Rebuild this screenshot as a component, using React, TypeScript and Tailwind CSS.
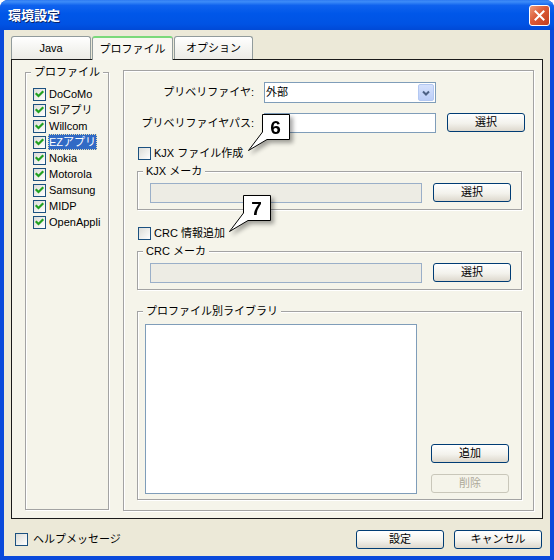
import React from "react";

const Check = ({ checked }: { checked?: boolean }) => (
  <span className="flex h-[13px] w-[13px] shrink-0 items-center justify-center border border-[#1C5180] bg-[linear-gradient(135deg,#DCDCD7,#FFFFFF)]">
    {checked && (
      <svg width="11" height="11" viewBox="0 0 11 11" className="block">
        <path d="M2.5 5 L4.5 7 L8.5 3" fill="none" stroke="#21A121" strokeWidth="2.2" strokeLinecap="square" />
      </svg>
    )}
  </span>
);

const Btn = ({ children, className = "", disabled }: { children: React.ReactNode; className?: string; disabled?: boolean }) => (
  <div
    className={`flex shrink-0 items-center justify-center rounded-[3px] border ${
      disabled
        ? "border-[#C9C7BA] bg-[#F5F4EA] text-[#ACA899]"
        : "border-[#003C74] bg-[linear-gradient(to_bottom,#FFFFFF,#F3F2EC_55%,#DDD8CD)] text-black"
    } ${className}`}
  >
    {children}
  </div>
);

const Group = ({ label, className = "", children }: { label: string; className?: string; children?: React.ReactNode }) => (
  <div className={`relative shrink-0 border border-[#A3A3A3] shadow-[1px_1px_0_#FFFFFF,inset_1px_1px_0_#FFFFFF] ${className}`}>
    <span className="absolute -top-[7px] left-[5px] bg-[#F5F4EA] px-[3px] leading-[13px]">{label}</span>
    {children}
  </div>
);

const Callout = ({ n, className = "" }: { n: string; className?: string }) => (
  <svg width="60" height="46" viewBox="0 0 60 46" className={`absolute drop-shadow-[3px_3px_2px_rgba(0,0,0,0.35)] ${className}`}>
    <path d="M22.5 4.5 H49.5 V29.5 H27 L8.5 40.5 L22.5 22 Z" fill="#FFFFFF" stroke="#000000" strokeWidth="1" />
    <text x="35.5" y="23.5" textAnchor="middle" fontFamily="Liberation Sans, Arial, sans-serif" fontWeight="bold" fontSize="19" fill="#000000">
      {n}
    </text>
  </svg>
);

const profiles = ["DoCoMo", "SIアプリ", "Willcom", "EZアプリ", "Nokia", "Motorola", "Samsung", "MIDP", "OpenAppli"];

export default function App() {
  return (
    <div className="relative flex h-[560px] w-[554px] flex-col overflow-hidden rounded-t-[8px] bg-[#0A4ADB] font-['Liberation_Sans','Noto_Sans_CJK_JP',sans-serif] text-[11px] leading-[13px] text-black">
      {/* Title bar */}
      <div className="flex h-[30px] shrink-0 items-center bg-[linear-gradient(to_bottom,#2F7BF2_0%,#3D8CF8_6%,#0F62EE_18%,#0057E9_45%,#0053E4_80%,#0049D6_100%)] pl-[8px] pr-[4px]">
        <span className="font-['Noto_Sans_CJK_JP',sans-serif] text-[13px] font-bold leading-[16px] text-white [text-shadow:1px_1px_0_#0A246A]">
          環境設定
        </span>
        <div className="ml-auto flex h-[21px] w-[21px] items-center justify-center rounded-[3px] border border-white bg-[linear-gradient(135deg,#EE9A78,#DB5A36_45%,#C23E1E)]">
          <svg width="11" height="11" viewBox="0 0 11 11" className="block">
            <path d="M1.5 1.5 L9.5 9.5 M9.5 1.5 L1.5 9.5" stroke="#FFFFFF" strokeWidth="2" strokeLinecap="square" />
          </svg>
        </div>
      </div>

      {/* Client area */}
      <div className="mx-[4px] mb-[4px] flex flex-1 flex-col bg-[#ECE9D8]">
        {/* Tabs */}
        <div className="ml-[7px] mt-[6px] flex h-[23px] items-end gap-[1px]">
          <div className="flex h-[23px] w-[80px] items-center justify-center rounded-t-[3px] border border-b-0 border-[#919B9C] bg-[linear-gradient(to_bottom,#FFFFFF,#F3F3EF_60%,#ECEBE6)]">
            Java
          </div>
          <div className="relative z-10 -mb-[1px] flex h-[24px] w-[81px] items-center justify-center rounded-t-[3px] border border-b-0 border-[#919B9C] border-t-[2px] border-t-[#7BD97B] bg-[#F8F7F1]">
            プロファイル
          </div>
          <div className="flex h-[23px] w-[79px] items-center justify-center rounded-t-[3px] border border-b-0 border-[#919B9C] bg-[linear-gradient(to_bottom,#FFFFFF,#F3F3EF_60%,#ECEBE6)]">
            オプション
          </div>
        </div>

        {/* Tab page */}
        <div className="ml-[7px] flex h-[460px] w-[532px] items-start border border-[#1A1A1A] bg-[#F5F4EA]">
          {/* Left profile list */}
          <Group label="プロファイル" className="ml-[13px] mt-[12px] h-[438px] w-[84px]">
            <div className="flex flex-col pt-[13px]">
              {profiles.map((p) => (
                <div key={p} className="flex h-[16px] items-center pl-[7px]">
                  <Check checked />
                  <span
                    className={`ml-[2px] flex h-[16px] items-center px-[1px] ${
                      p === "EZアプリ" ? "bg-[#316AC5] text-white outline-1 -outline-offset-1 outline-dotted outline-[#E8E0B0]" : ""
                    }`}
                  >
                    {p}
                  </span>
                </div>
              ))}
            </div>
          </Group>

          {/* Right settings box */}
          <div className="ml-[14px] mt-[10px] flex h-[441px] w-[411px] flex-col border border-[#A3A3A3] shadow-[1px_1px_0_#FFFFFF,inset_1px_1px_0_#FFFFFF]">
            {/* Preverifier */}
            <div className="mt-[11px] flex h-[21px] items-center">
              <span className="w-[130px] text-right">プリベリファイヤ:</span>
              <div className="ml-[10px] flex h-[21px] w-[172px] items-center border border-[#7F9DB9] bg-white pl-[1px]">
                <span>外部</span>
                <div className="ml-auto mr-[1px] flex h-[17px] w-[16px] items-center justify-center rounded-[2px] border border-[#B3C8F2] bg-[linear-gradient(to_bottom,#D5E1FC,#BCCEF8)]">
                  <svg width="10" height="8" viewBox="0 0 10 8" className="block">
                    <path d="M2 2.5 L5 5.5 L8 2.5" fill="none" stroke="#4D6185" strokeWidth="2" />
                  </svg>
                </div>
              </div>
            </div>

            {/* Preverifier path */}
            <div className="mt-[10px] flex h-[20px] items-start">
              <span className="h-[20px] w-[130px] text-right leading-[20px]">プリベリファイヤパス:</span>
              <div className="ml-[10px] h-[20px] w-[172px] border border-[#7F9DB9] bg-white" />
              <Btn className="ml-[11px] h-[19px] w-[78px]">選択</Btn>
            </div>

            {/* KJX */}
            <div className="ml-[14px] mt-[14px] flex h-[13px] items-center">
              <Check />
              <span className="ml-[3px]">KJX ファイル作成</span>
            </div>
            <Group label="KJX メーカ" className="ml-[13px] mt-[11px] h-[39px] w-[385px]">
              <div className="flex items-start pl-[12px] pt-[11px]">
                <div className="h-[20px] w-[272px] border border-[#9AAFC8] bg-[#EDECE4]" />
                <Btn className="ml-[11px] h-[19px] w-[78px]">選択</Btn>
              </div>
            </Group>

            {/* CRC */}
            <div className="ml-[14px] mt-[17px] flex h-[13px] items-center">
              <Check />
              <span className="ml-[3px]">CRC 情報追加</span>
            </div>
            <Group label="CRC メーカ" className="ml-[13px] mt-[11px] h-[39px] w-[385px]">
              <div className="flex items-start pl-[12px] pt-[11px]">
                <div className="h-[20px] w-[272px] border border-[#9AAFC8] bg-[#EDECE4]" />
                <Btn className="ml-[11px] h-[19px] w-[78px]">選択</Btn>
              </div>
            </Group>

            {/* Library */}
            <Group label="プロファイル別ライブラリ" className="ml-[13px] mt-[21px] h-[189px] w-[385px]">
              <div className="flex items-start pl-[7px] pt-[12px]">
                <div className="h-[170px] w-[272px] border border-[#7F9DB9] bg-white" />
                <div className="ml-[14px] flex flex-col">
                  <Btn className="mt-[120px] h-[19px] w-[78px]">追加</Btn>
                  <Btn disabled className="mt-[11px] h-[19px] w-[78px]">
                    削除
                  </Btn>
                </div>
              </div>
            </Group>
          </div>
        </div>

        {/* Bottom row */}
        <div className="mt-[11px] flex h-[19px] items-center pl-[11px] pr-[8px]">
          <Check />
          <span className="ml-[5px]">ヘルプメッセージ</span>
          <div className="ml-auto flex gap-[10px]">
            <Btn className="h-[19px] w-[88px]">設定</Btn>
            <Btn className="h-[19px] w-[88px]">キャンセル</Btn>
          </div>
        </div>
      </div>

      <Callout n="6" className="left-[240px] top-[110px]" />
      <Callout n="7" className="left-[221px] top-[191px]" />
    </div>
  );
}
